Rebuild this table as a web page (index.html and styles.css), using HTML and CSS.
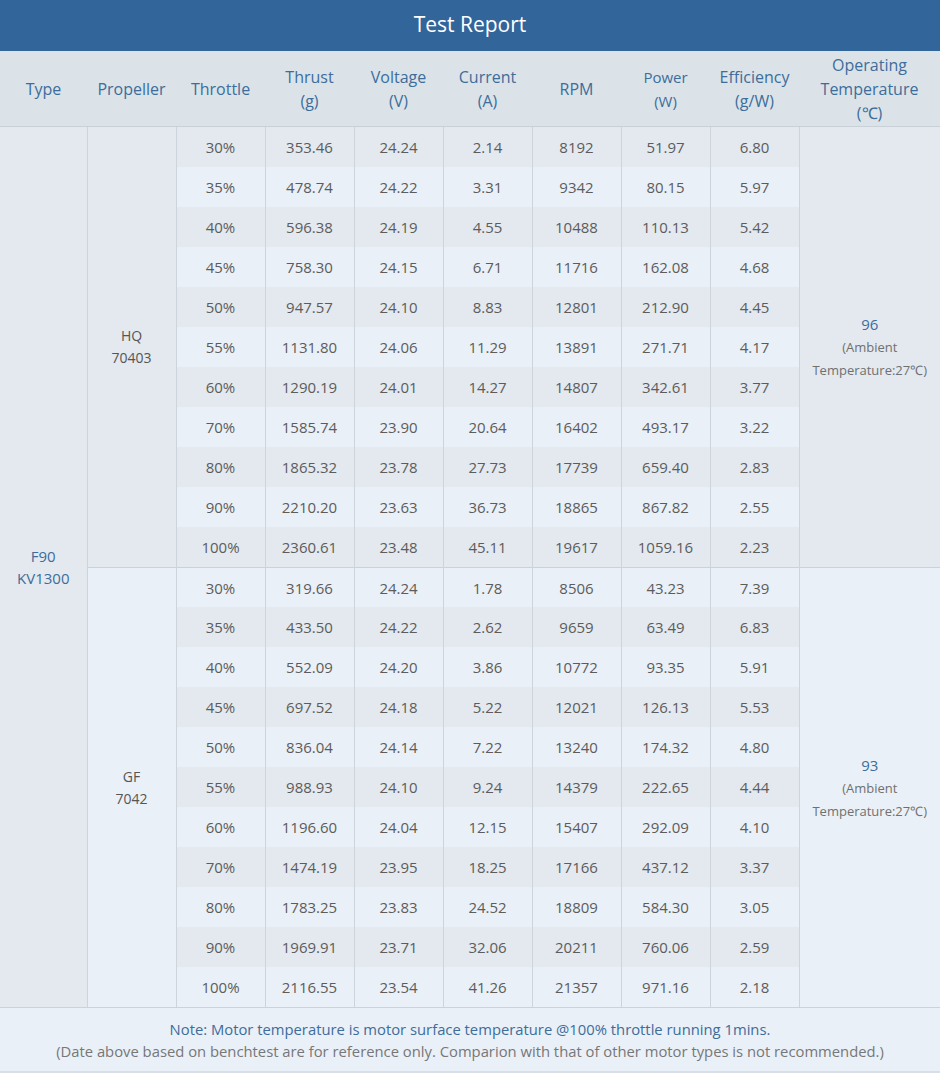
FILE: index.html
```html
<!DOCTYPE html>
<html lang="en">
<head>
<meta charset="utf-8">
<title>Test Report</title>
<link rel="stylesheet" href="styles.css">
</head>
<body>
<div class="report">
  <div class="title">Test Report</div>
  <table class="grid">
    <colgroup>
      <col class="c-type"><col class="c-std"><col class="c-std"><col class="c-std"><col class="c-std"><col class="c-std"><col class="c-std"><col class="c-std"><col class="c-std"><col class="c-temp">
    </colgroup>
    <thead>
      <tr>
        <th>Type</th><th>Propeller</th><th>Throttle</th><th>Thrust<br>(g)</th><th>Voltage<br>(V)</th><th>Current<br>(A)</th><th>RPM</th><th class="sm">Power<br>(W)</th><th>Efficiency<br>(g/W)</th><th>Operating<br>Temperature<br>(℃)</th>
      </tr>
    </thead>
    <tbody>
      <tr class="odd"><td class="span blue" rowspan="22">F90<br>KV1300</td><td class="span prop" rowspan="11">HQ<br>70403</td><td>30%</td><td>353.46</td><td>24.24</td><td>2.14</td><td>8192</td><td>51.97</td><td>6.80</td><td class="span temp" rowspan="11"><span class="tv">96</span><br><span class="amb">(Ambient<br>Temperature:27℃)</span></td></tr>
      <tr class="even"><td>35%</td><td>478.74</td><td>24.22</td><td>3.31</td><td>9342</td><td>80.15</td><td>5.97</td></tr>
      <tr class="odd"><td>40%</td><td>596.38</td><td>24.19</td><td>4.55</td><td>10488</td><td>110.13</td><td>5.42</td></tr>
      <tr class="even"><td>45%</td><td>758.30</td><td>24.15</td><td>6.71</td><td>11716</td><td>162.08</td><td>4.68</td></tr>
      <tr class="odd"><td>50%</td><td>947.57</td><td>24.10</td><td>8.83</td><td>12801</td><td>212.90</td><td>4.45</td></tr>
      <tr class="even"><td>55%</td><td>1131.80</td><td>24.06</td><td>11.29</td><td>13891</td><td>271.71</td><td>4.17</td></tr>
      <tr class="odd"><td>60%</td><td>1290.19</td><td>24.01</td><td>14.27</td><td>14807</td><td>342.61</td><td>3.77</td></tr>
      <tr class="even"><td>70%</td><td>1585.74</td><td>23.90</td><td>20.64</td><td>16402</td><td>493.17</td><td>3.22</td></tr>
      <tr class="odd"><td>80%</td><td>1865.32</td><td>23.78</td><td>27.73</td><td>17739</td><td>659.40</td><td>2.83</td></tr>
      <tr class="even"><td>90%</td><td>2210.20</td><td>23.63</td><td>36.73</td><td>18865</td><td>867.82</td><td>2.55</td></tr>
      <tr class="odd"><td>100%</td><td>2360.61</td><td>23.48</td><td>45.11</td><td>19617</td><td>1059.16</td><td>2.23</td></tr>
      <tr class="even group"><td class="span prop" rowspan="11">GF<br>7042</td><td>30%</td><td>319.66</td><td>24.24</td><td>1.78</td><td>8506</td><td>43.23</td><td>7.39</td><td class="span temp" rowspan="11"><span class="tv">93</span><br><span class="amb">(Ambient<br>Temperature:27℃)</span></td></tr>
      <tr class="odd"><td>35%</td><td>433.50</td><td>24.22</td><td>2.62</td><td>9659</td><td>63.49</td><td>6.83</td></tr>
      <tr class="even"><td>40%</td><td>552.09</td><td>24.20</td><td>3.86</td><td>10772</td><td>93.35</td><td>5.91</td></tr>
      <tr class="odd"><td>45%</td><td>697.52</td><td>24.18</td><td>5.22</td><td>12021</td><td>126.13</td><td>5.53</td></tr>
      <tr class="even"><td>50%</td><td>836.04</td><td>24.14</td><td>7.22</td><td>13240</td><td>174.32</td><td>4.80</td></tr>
      <tr class="odd"><td>55%</td><td>988.93</td><td>24.10</td><td>9.24</td><td>14379</td><td>222.65</td><td>4.44</td></tr>
      <tr class="even"><td>60%</td><td>1196.60</td><td>24.04</td><td>12.15</td><td>15407</td><td>292.09</td><td>4.10</td></tr>
      <tr class="odd"><td>70%</td><td>1474.19</td><td>23.95</td><td>18.25</td><td>17166</td><td>437.12</td><td>3.37</td></tr>
      <tr class="even"><td>80%</td><td>1783.25</td><td>23.83</td><td>24.52</td><td>18809</td><td>584.30</td><td>3.05</td></tr>
      <tr class="odd"><td>90%</td><td>1969.91</td><td>23.71</td><td>32.06</td><td>20211</td><td>760.06</td><td>2.59</td></tr>
      <tr class="even"><td>100%</td><td>2116.55</td><td>23.54</td><td>41.26</td><td>21357</td><td>971.16</td><td>2.18</td></tr>
    </tbody>
  </table>
  <div class="note">
    <p class="note-main">Note: Motor temperature is motor surface temperature @100% throttle running 1mins.</p>
    <p class="note-sub">(Date above based on benchtest are for reference only. Comparion with that of other motor types is not recommended.)</p>
  </div>
</div>
</body>
</html>
```
FILE: styles.css
```css
html, body {
  margin: 0;
  padding: 0;
  background: #ffffff;
}

.report {
  width: 940px;
  font-family: "Open Sans", "Liberation Sans", sans-serif;
}

.title {
  height: 51px;
  line-height: 49px;
  background: #326599;
  color: #ffffff;
  font-size: 21px;
  text-align: center;
}

.grid {
  width: 940px;
  table-layout: fixed;
  border-collapse: collapse;
  border-spacing: 0;
}

.c-type { width: 87px; }
.c-std { width: 89px; }
.c-temp { width: 141px; }

.grid th {
  height: 75px;
  padding: 0;
  background: #dbe3e9;
  color: #3d6d9b;
  font-weight: normal;
  font-size: 16px;
  line-height: 24px;
  text-align: center;
  vertical-align: middle;
  border-bottom: 1px solid #c8d0d8;
}

.grid th.sm {
  font-size: 15px;
}

.grid td {
  height: 40px;
  padding: 0;
  text-align: center;
  vertical-align: middle;
  font-size: 15px;
  color: #5c5c5c;
  border-left: 1px solid #cdd4dc;
  border-right: 1px solid #cdd4dc;
}

.grid tr.odd td { background: #e3e9ef; }
.grid tr.even td { background: #eaf0f7; }

.grid tr.group td {
  height: 39px;
  border-top: 1px solid #cbd2da;
}

.grid td.span {
  background: #eaeff7;
  line-height: 22px;
}

.grid td.blue {
  color: #3d6d9b;
  border-left: none;
}

.grid td.prop {
  font-size: 14px;
  color: #555555;
}

.grid td.temp {
  border-right: none;
  line-height: 22px;
}

.tv {
  color: #3d6d9b;
  font-size: 15px;
}

.amb {
  font-size: 13px;
  color: #707070;
}

.note {
  background: #eaf0f7;
  border-top: 1px solid #cbd2da;
  border-bottom: 2px solid #d8dfe6;
  height: 66px;
  box-sizing: border-box;
  padding-top: 10px;
  text-align: center;
  font-size: 14.8px;
  line-height: 22px;
}

.note p {
  margin: 0;
}

.note-main {
  color: #3d6d9b;
}

.note-sub {
  color: #777777;
}
```
